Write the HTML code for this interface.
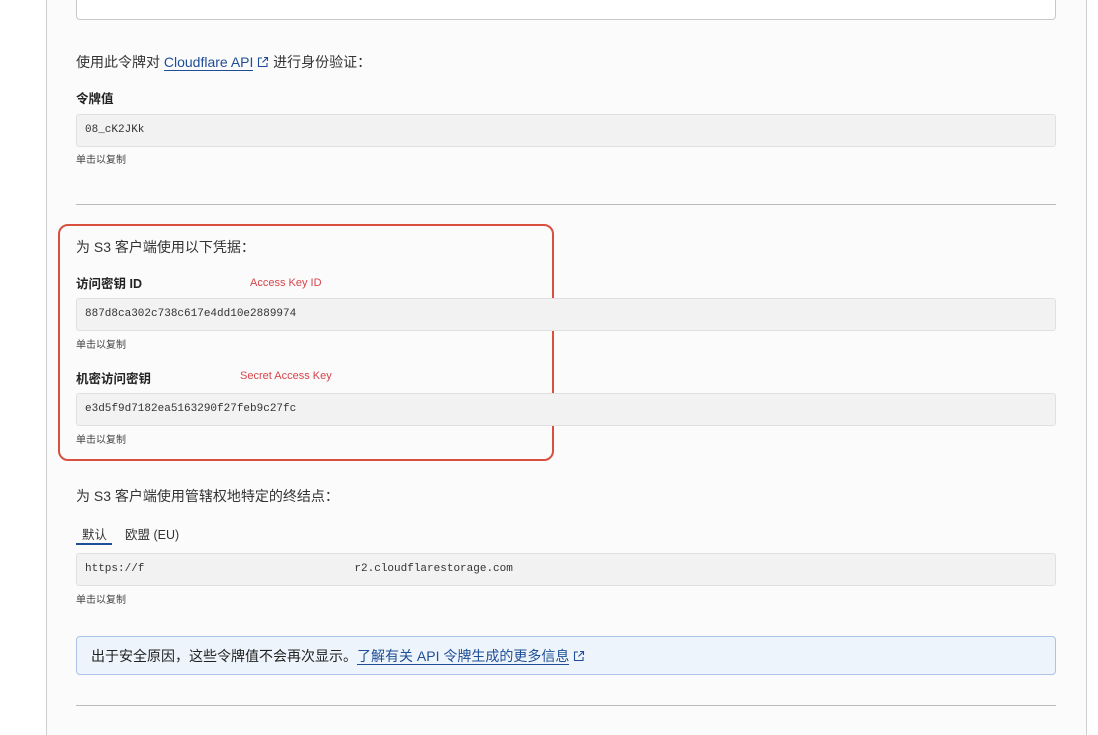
<!DOCTYPE html>
<html><head><meta charset="utf-8"><style>
*{box-sizing:border-box;margin:0;padding:0}
body{width:1098px;height:727px;background:#fff;position:relative;overflow:hidden;font-family:"Liberation Sans","Noto Sans CJK SC",sans-serif;color:#222}
.card{position:absolute;left:46px;top:-5px;width:1041px;height:740px;background:#fbfbfb;border-left:1.5px solid #cfcfcf;border-right:1.5px solid #cfcfcf}
.a{position:absolute}
.t{font-size:14px;color:#333}
.lb{font-size:12.5px;font-weight:bold;color:#222}
.inp{position:absolute;left:76px;width:980px;height:33px;background:#f2f2f2;border:1px solid #e0e0e0;border-radius:3px;font-family:"Liberation Mono",monospace;font-size:11px;color:#333;padding-left:8px;line-height:31px}
.s{font-size:10px;color:#444}
.hr{position:absolute;left:76px;width:980px;height:1px;background:#bbb}
.red{font-size:11px;color:#d6454a}
a{color:#1d4e96;text-decoration:none;border-bottom:1px solid #1d4e96}
.ext{display:inline-block;vertical-align:-1px}
</style></head><body>
<div class="card"></div>
<div class="a" style="left:76px;top:-10px;width:980px;height:30px;border:1px solid #c8c8c8;border-radius:4px;background:#fff"></div>
<div class="a t" style="left:76px;top:52px">使用此令牌对 <a>Cloudflare API</a> <svg class="ext" width="12" height="12" viewBox="0 0 12 12"><path d="M5 2H1.5v8.5H10V7M7 1.5h3.5V5M10.5 1.5L5.5 6.5" fill="none" stroke="#1d4e96" stroke-width="1.1"/></svg> 进行身份验证：</div>
<div class="a lb" style="left:76px;top:88px">令牌值</div>
<div class="inp" style="top:114px">08_cK2JKk</div>
<div class="a s" style="left:76px;top:151px">单击以复制</div>
<div class="hr" style="top:204px"></div>
<div class="a" style="left:58px;top:224px;width:496px;height:237px;border:2px solid #d9503f;border-radius:10px"></div>
<div class="a t" style="left:76px;top:237px">为 S3 客户端使用以下凭据：</div>
<div class="a lb" style="left:76px;top:273px">访问密钥 ID</div>
<div class="a red" style="left:250px;top:277px">Access Key ID</div>
<div class="inp" style="top:298px">887d8ca302c738c617e4dd10e2889974</div>
<div class="a s" style="left:76px;top:336px">单击以复制</div>
<div class="a lb" style="left:76px;top:368px">机密访问密钥</div>
<div class="a red" style="left:240px;top:370px">Secret Access Key</div>
<div class="inp" style="top:393px">e3d5f9d7182ea5163290f27feb9c27fc</div>
<div class="a s" style="left:76px;top:431px">单击以复制</div>
<div class="a t" style="left:76px;top:486px">为 S3 客户端使用管辖权地特定的终结点：</div>
<div class="a" style="left:82px;top:524px;font-size:12.5px;color:#333">默认</div>
<div class="a" style="left:125px;top:524px;font-size:12.5px;color:#333">欧盟 (EU)</div>
<div class="a" style="left:76px;top:543px;width:36px;height:2px;background:#1d4e96"></div>
<div class="inp" style="top:553px">https://f<span style="padding-left:210px"></span>r2.cloudflarestorage.com</div>
<div class="a s" style="left:76px;top:591px">单击以复制</div>
<div class="a" style="left:76px;top:636px;width:980px;height:39px;background:#eef4fb;border:1px solid #a9c4e6;border-radius:4px;padding:9px 0 0 14px;font-size:14px;color:#222">出于安全原因，这些令牌值不会再次显示。<a>了解有关 API 令牌生成的更多信息</a> <svg class="ext" width="12" height="12" viewBox="0 0 12 12"><path d="M5 2H1.5v8.5H10V7M7 1.5h3.5V5M10.5 1.5L5.5 6.5" fill="none" stroke="#1d4e96" stroke-width="1.1"/></svg></div>
<div class="hr" style="top:705px"></div>
</body></html>
